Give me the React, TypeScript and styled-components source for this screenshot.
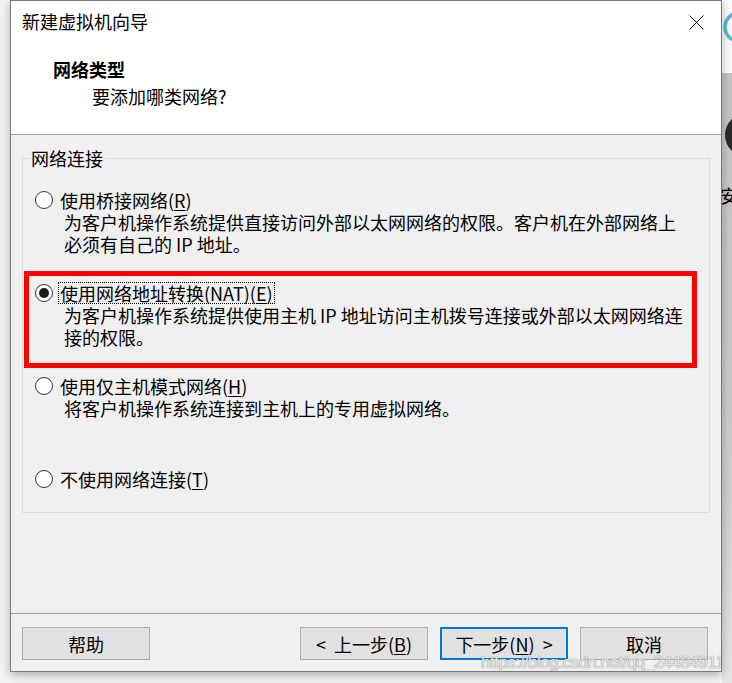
import React from "react";
import styled, { createGlobalStyle } from "styled-components";

const Global = createGlobalStyle`
  html, body { margin: 0; padding: 0; background: #f3f3f3; }
  body { font-family: "Noto Sans CJK SC", "Liberation Sans", sans-serif; color: #000; }
  #root { width: 732px; height: 683px; overflow: hidden; }
`;

const Page = styled.div`
  display: flex;
  width: 732px;
  height: 683px;
  background: #f3f3f3;
  overflow: hidden;
`;

const LeftGutter = styled.div`
  width: 10px;
  flex: none;
`;

const Dialog = styled.div`
  position: relative;
  z-index: 1;
  flex: none;
  width: 712px;
  height: 672px;
  box-sizing: border-box;
  border: 1px solid #7a7a7a;
  background: #f0f0f0;
  display: flex;
  flex-direction: column;
  box-shadow: 0 3px 9px rgba(0, 0, 0, 0.28);
  overflow: hidden;
`;

const Header = styled.header`
  flex: none;
  height: 134px;
  box-sizing: border-box;
  background: #fff;
  border-bottom: 1px solid #a0a0a0;
  padding: 8px 17px 0 11px;
  display: flex;
  flex-direction: column;
`;

const TitleRow = styled.div`
  display: flex;
  justify-content: space-between;
  align-items: flex-start;
  height: 24px;
`;

const Title = styled.div`
  font-size: 18px;
  line-height: 24px;
`;

const CloseButton = styled.button`
  margin-top: 6px;
  width: 15px;
  height: 15px;
  padding: 0;
  border: none;
  background: transparent;
  display: block;
  svg { display: block; }
`;

const PageHeading = styled.div`
  margin-top: 25px;
  padding-left: 31px;
  font-size: 18px;
  line-height: 22px;
  font-weight: 700;
`;

const PageSub = styled.div`
  margin-top: 5px;
  padding-left: 70px;
  font-size: 18px;
  line-height: 22px;
`;

const Body = styled.main`
  flex: 1;
  padding: 12px 11px 0 11px;
`;

const Group = styled.fieldset`
  margin: 0;
  padding: 20px 7px 0 7px;
  height: 366px;
  box-sizing: border-box;
  border: 1px solid #dcdcdc;
  min-width: 0;
`;

const Legend = styled.legend`
  padding: 0 2px 0 1px;
  margin-left: 0;
  font-size: 18px;
  line-height: 22px;
`;

const Options = styled.div`
  display: flex;
  flex-direction: column;
  gap: 27px;
`;

const Option = styled.div`
  position: relative;
  display: flex;
  flex-direction: column;
  min-height: 66px;
  &:last-child { min-height: 0; }
`;

const RadioRow = styled.div`
  display: flex;
  align-items: center;
  height: 22px;
  gap: 5px;
  padding-left: 5px;
`;

const RadioCircle = styled.span`
  flex: none;
  width: 18px;
  height: 18px;
  box-sizing: border-box;
  border: 1px solid #333;
  border-radius: 50%;
  background: #fff;
  display: grid;
  place-items: center;
`;

const RadioDot = styled.span`
  width: 10px;
  height: 10px;
  border-radius: 50%;
  background: #1a1a1a;
`;

const RadioLabel = styled.span<{ $focused?: boolean }>`
  font-size: 18px;
  line-height: 20px;
  padding: 0 1px;
  border: 1px dotted ${(p) => (p.$focused ? "#000" : "transparent")};
  white-space: nowrap;
`;

const Key = styled.span`
  text-decoration: underline;
  text-underline-offset: 2px;
`;

const Desc = styled.div`
  padding-left: 34px;
  font-size: 18px;
  line-height: 22px;
  white-space: nowrap;
`;

const Highlight = styled.div`
  position: absolute;
  top: -11px;
  left: -6px;
  width: 673px;
  height: 97px;
  box-sizing: border-box;
  border: 5px solid #ff0000;
  pointer-events: none;
`;

const Footer = styled.footer`
  flex: none;
  height: 58px;
  box-sizing: border-box;
  border-top: 1px solid #a0a0a0;
  padding: 13px 13px 0 11px;
  display: flex;
  justify-content: space-between;
  align-items: flex-start;
`;

const ButtonGroup = styled.div`
  display: flex;
  gap: 12px;
`;

const Button = styled.button<{ $primary?: boolean }>`
  width: 128px;
  height: 33px;
  box-sizing: border-box;
  padding: 0;
  font-family: "Noto Sans CJK SC", "Liberation Sans", sans-serif;
  font-size: 18px;
  line-height: 22px;
  color: #000;
  background: #e1e1e1;
  border: ${(p) => (p.$primary ? "2px solid #0078d7" : "1px solid #adadad")};
  white-space: pre;
`;

const Watermark = styled.div`
  position: absolute;
  left: 470px;
  top: 652px;
  font-family: "Liberation Sans", sans-serif;
  font-size: 17px;
  letter-spacing: -0.5px;
  line-height: 20px;
  white-space: nowrap;
  color: rgba(240, 240, 240, 0.9);
  text-shadow: 0 0 1px rgba(110, 110, 110, 0.75), 0 0 1px rgba(110, 110, 110, 0.5);
  pointer-events: none;
`;

const RightStrip = styled.div`
  width: 10px;
  flex: none;
  display: flex;
  flex-direction: column;
  overflow: hidden;
`;

const StripTop = styled.div`
  height: 73px;
  flex: none;
  background: #fafafa;
  svg { display: block; }
`;

const StripBottom = styled.div`
  flex: 1;
  background: linear-gradient(180deg, #c3c3c3 0%, #cbcbcb 60%, #e4e4e4 100%);
  display: flex;
  flex-direction: column;
  svg { display: block; }
`;

const StripText = styled.span`
  margin-top: 21px;
  margin-left: -2px;
  font-size: 18px;
  line-height: 22px;
  white-space: nowrap;
`;

type Opt = {
  label: string;
  key: string;
  lines: string[];
  selected?: boolean;
};

const options: Opt[] = [
  {
    label: "使用桥接网络",
    key: "R",
    lines: [
      "为客户机操作系统提供直接访问外部以太网网络的权限。客户机在外部网络上",
      "必须有自己的 IP 地址。",
    ],
  },
  {
    label: "使用网络地址转换(NAT)",
    key: "E",
    selected: true,
    lines: [
      "为客户机操作系统提供使用主机 IP 地址访问主机拨号连接或外部以太网网络连",
      "接的权限。",
    ],
  },
  {
    label: "使用仅主机模式网络",
    key: "H",
    lines: ["将客户机操作系统连接到主机上的专用虚拟网络。"],
  },
  { label: "不使用网络连接", key: "T", lines: [] },
];

export default function App() {
  return (
    <>
      <Global />
      <Page>
        <LeftGutter />
        <Dialog>
          <Header>
            <TitleRow>
              <Title>新建虚拟机向导</Title>
              <CloseButton aria-label="关闭">
                <svg width="15" height="15" viewBox="0 0 15 15">
                  <path d="M0.5 0.5 L14.5 14.5 M14.5 0.5 L0.5 14.5" stroke="#000" strokeWidth="1" fill="none" />
                </svg>
              </CloseButton>
            </TitleRow>
            <PageHeading>网络类型</PageHeading>
            <PageSub>要添加哪类网络?</PageSub>
          </Header>
          <Body>
            <Group>
              <Legend>网络连接</Legend>
              <Options>
                {options.map((o) => (
                  <Option key={o.key}>
                    <RadioRow>
                      <RadioCircle>{o.selected && <RadioDot />}</RadioCircle>
                      <RadioLabel $focused={o.selected}>
                        {o.label}(<Key>{o.key}</Key>)
                      </RadioLabel>
                    </RadioRow>
                    {o.lines.map((l, i) => (
                      <Desc key={i}>{l}</Desc>
                    ))}
                    {o.selected && <Highlight />}
                  </Option>
                ))}
              </Options>
            </Group>
          </Body>
          <Footer>
            <Button>帮助</Button>
            <ButtonGroup>
              <Button>
                {"<  上一步("}<Key>B</Key>)
              </Button>
              <Button $primary>
                下一步(<Key>N</Key>{")  >"}
              </Button>
              <Button>取消</Button>
            </ButtonGroup>
          </Footer>
          <Watermark>https://blog.csdn.net/qq_24484911</Watermark>
        </Dialog>
        <RightStrip>
          <StripTop>
            <svg width="10" height="73" viewBox="0 0 10 73">
              <circle cx="17" cy="27" r="14" stroke="#5ab6d2" strokeWidth="3.5" fill="none" />
            </svg>
          </StripTop>
          <StripBottom>
            <svg width="10" height="90" viewBox="0 0 10 90">
              <circle cx="25" cy="62" r="22" fill="#2a2a2a" />
            </svg>
            <StripText>安装</StripText>
          </StripBottom>
        </RightStrip>
      </Page>
    </>
  );
}
